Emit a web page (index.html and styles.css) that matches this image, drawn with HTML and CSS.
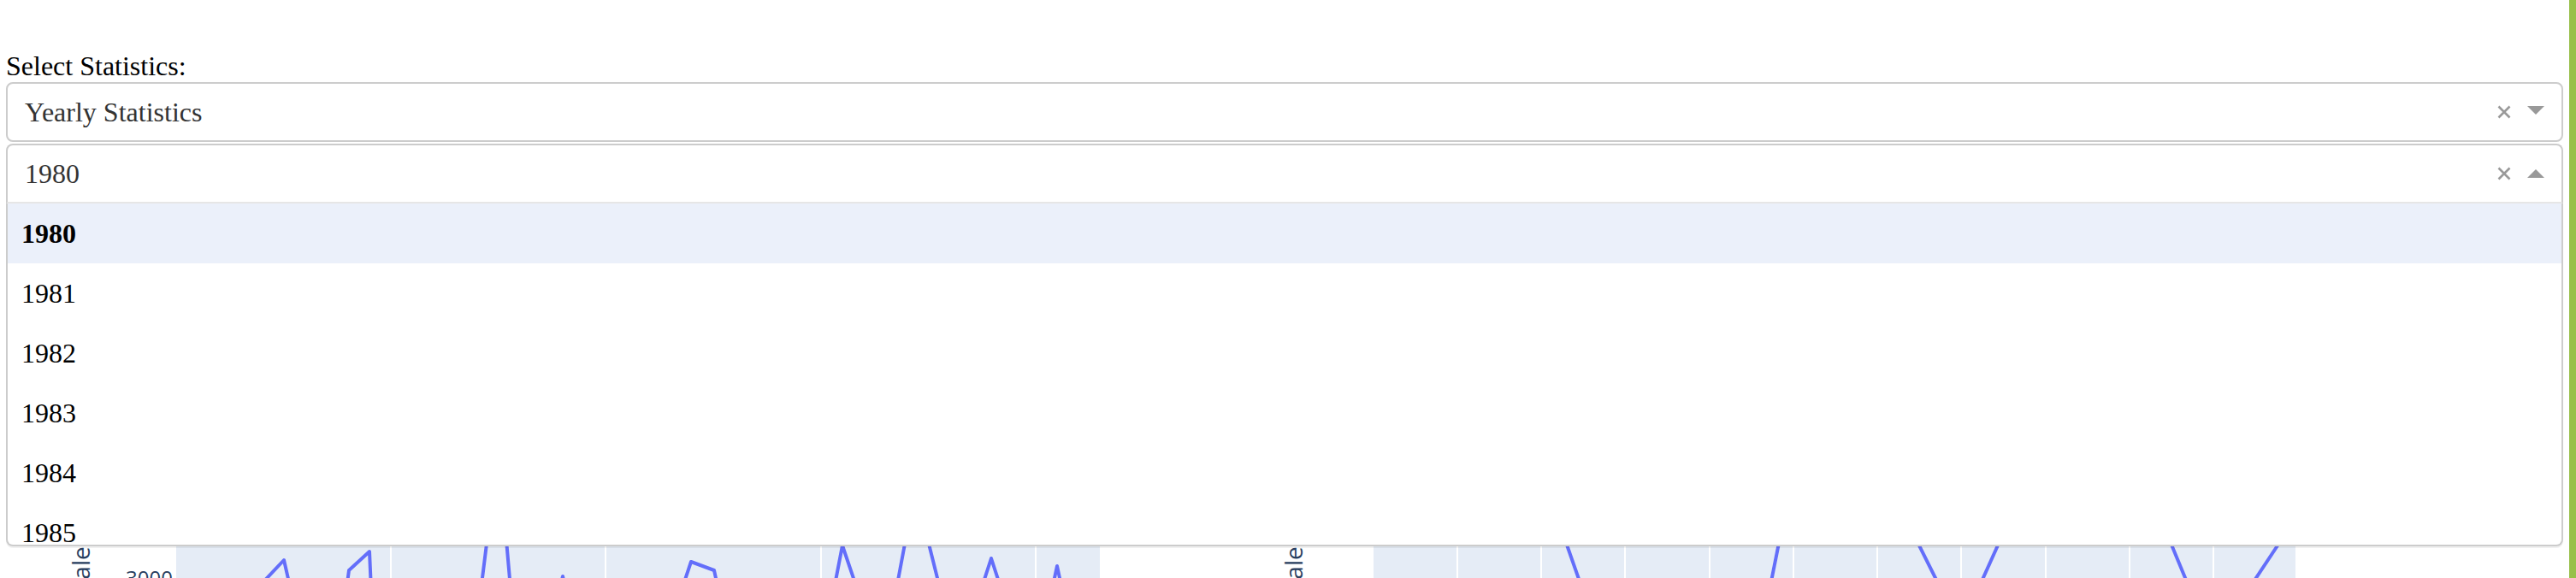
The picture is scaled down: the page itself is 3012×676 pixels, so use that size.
FILE: index.html
```html
<!DOCTYPE html>
<html>
<head>
<meta charset="utf-8">
<title>Statistics</title>
<link rel="stylesheet" href="styles.css">
</head>
<body>
<div class="page">
  <main class="content">
    <label class="field-label">Select Statistics:</label>
    <div class="select">
      <div class="select-control">
        <span class="select-value">Yearly Statistics</span>
        <span class="select-clear" title="Clear value"><svg class="clear-icon" viewBox="0 0 16 16" xmlns="http://www.w3.org/2000/svg"><path d="M1.5 1.5 L14.5 14.5 M14.5 1.5 L1.5 14.5"/></svg></span>
        <span class="select-arrow-zone"><span class="select-arrow"></span></span>
      </div>
    </div>
    <div class="select is-open">
      <div class="select-control">
        <span class="select-value">1980</span>
        <span class="select-clear" title="Clear value"><svg class="clear-icon" viewBox="0 0 16 16" xmlns="http://www.w3.org/2000/svg"><path d="M1.5 1.5 L14.5 14.5 M14.5 1.5 L1.5 14.5"/></svg></span>
        <span class="select-arrow-zone"><span class="select-arrow up"></span></span>
      </div>
      <div class="select-menu">
        <div class="option is-focused">1980</div>
        <div class="option">1981</div>
        <div class="option">1982</div>
        <div class="option">1983</div>
        <div class="option">1984</div>
        <div class="option">1985</div>
        <div class="option">1986</div>
      </div>
    </div>
    <div class="graphs">
      <svg class="graph" viewBox="7 240 1495 460" xmlns="http://www.w3.org/2000/svg">
        <rect x="206" y="300" width="1080" height="400" fill="#e5ecf6"/>
        <g stroke="#ffffff" stroke-width="2">
          <line x1="457" y1="300" x2="457" y2="700"/>
          <line x1="708" y1="300" x2="708" y2="700"/>
          <line x1="960" y1="300" x2="960" y2="700"/>
          <line x1="1211" y1="300" x2="1211" y2="700"/>
        </g>
        <g fill="none" stroke="#636efa" stroke-width="4" stroke-linejoin="round">
          <polyline points="299,690 332,655 340,690"/>
          <polyline points="405,690 408,667 432,645 434,690"/>
          <polyline points="561,700 571,620 591,620 598,700"/>
          <polyline points="652,700 658,674 664,700"/>
          <polyline points="797,690 808,657 835,667 840,690"/>
          <polyline points="973,700 985,638 1006,700"/>
          <polyline points="1046,700 1061,620 1082,620 1102,700"/>
          <polyline points="1147,690 1159,653 1171,690"/>
          <polyline points="1230,690 1236,662 1242,690"/>
        </g>
        <text class="tick" x="202" y="685" text-anchor="end">3000</text>
        <text class="axis-title" transform="translate(105,693) rotate(-90)">Sales</text>
      </svg>
      <svg class="graph" viewBox="1502 240 1495 460" xmlns="http://www.w3.org/2000/svg">
        <rect x="1606" y="300" width="1078" height="400" fill="#e5ecf6"/>
        <g stroke="#ffffff" stroke-width="2">
          <line x1="1704" y1="300" x2="1704" y2="700"/>
          <line x1="1802" y1="300" x2="1802" y2="700"/>
          <line x1="1900" y1="300" x2="1900" y2="700"/>
          <line x1="1999" y1="300" x2="1999" y2="700"/>
          <line x1="2097" y1="300" x2="2097" y2="700"/>
          <line x1="2195" y1="300" x2="2195" y2="700"/>
          <line x1="2293" y1="300" x2="2293" y2="700"/>
          <line x1="2392" y1="300" x2="2392" y2="700"/>
          <line x1="2490" y1="300" x2="2490" y2="700"/>
          <line x1="2588" y1="300" x2="2588" y2="700"/>
        </g>
        <g fill="none" stroke="#636efa" stroke-width="4" stroke-linejoin="round">
          <polyline points="1826,620 1854,700"/>
          <polyline points="2083,620 2067,700"/>
          <polyline points="2235,620 2275,700"/>
          <polyline points="2344,620 2308,700"/>
          <polyline points="2532,620 2565,700"/>
          <polyline points="2675,620 2622,700"/>
        </g>
        <text class="axis-title" transform="translate(1523,693) rotate(-90)">Sales</text>
      </svg>
    </div>
  </main>
  <div class="side-bar"></div>
</div>
</body>
</html>
```

FILE: styles.css
```css
html, body {
  margin: 0;
  padding: 0;
  background: #ffffff;
  overflow: hidden;
}

.page {
  display: flex;
  height: 676px;
  overflow: hidden;
}

.content {
  flex: 1;
  min-width: 0;
  padding: 59px 7px 0 7px;
  font-family: "Liberation Serif", "Times New Roman", serif;
  font-size: 32px;
  color: #000;
}

.side-bar {
  flex: none;
  width: 8px;
  background: #98c04a;
}

.field-label {
  display: block;
  line-height: 37px;
}

.select {
  position: relative;
}

.select + .select {
  margin-top: 2px;
}

.select-control {
  display: flex;
  align-items: center;
  height: 70px;
  box-sizing: border-box;
  border: 2px solid #cccccc;
  border-radius: 8px;
  background: #ffffff;
}

.select-value {
  flex: 1;
  padding-left: 20px;
  color: #333333;
  line-height: 66px;
  white-space: nowrap;
}

.select-clear {
  flex: none;
  width: 34px;
  display: flex;
  justify-content: center;
  align-items: center;
}

.clear-icon {
  width: 16px;
  height: 16px;
  fill: none;
  stroke: #999999;
  stroke-width: 2.6;
  stroke-linecap: butt;
}

.select-arrow-zone {
  flex: none;
  width: 50px;
  padding-right: 10px;
  box-sizing: border-box;
  display: flex;
  justify-content: center;
  align-items: center;
}

.select-arrow {
  width: 0;
  height: 0;
  border-style: solid;
  border-color: #999999 transparent transparent;
  border-width: 10px 10px 5px;
}

.select-arrow.up {
  border-color: transparent transparent #999999;
  border-width: 0 10px 10px;
}

.is-open .select-control {
  border-radius: 8px 8px 0 0;
  border-bottom-color: #e6e6e6;
}

.select-menu {
  position: absolute;
  top: 100%;
  left: 0;
  right: 0;
  z-index: 5;
  height: 401px;
  box-sizing: border-box;
  border: 2px solid #cccccc;
  border-top: none;
  border-radius: 0 0 8px 8px;
  background: #ffffff;
  overflow: hidden;
  box-shadow: 0 2px 0 rgba(0, 0, 0, 0.06);
}

.option {
  height: 70px;
  line-height: 70px;
  padding-left: 16px;
  color: #000000;
}

.option.is-focused {
  background: #ebf0fa;
  font-weight: bold;
}

.graphs {
  display: flex;
  margin-top: 2px;
}

.graph {
  flex: none;
  width: 1495px;
  height: 460px;
  overflow: visible;
}

.tick {
  font-family: "Open Sans", Arial, sans-serif;
  font-size: 24px;
  fill: #2a3f5f;
}

.axis-title {
  font-family: "Open Sans", Arial, sans-serif;
  font-size: 28px;
  fill: #2a3f5f;
}
```
